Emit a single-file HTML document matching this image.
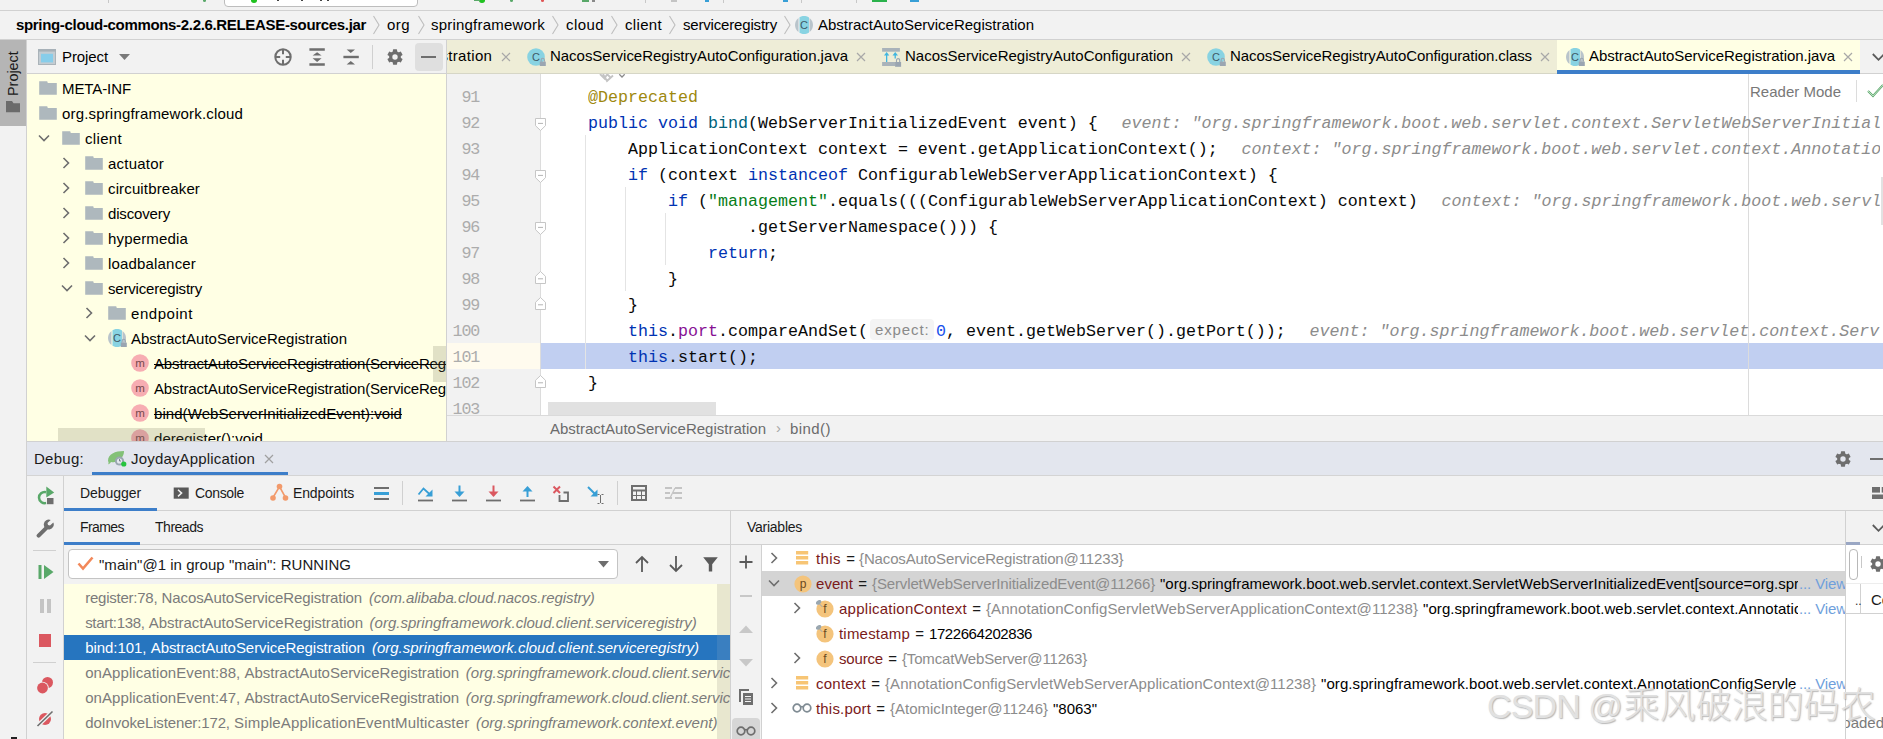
<!DOCTYPE html>
<html lang="en"><head><meta charset="utf-8"><title>IDE</title>
<style>
html,body{margin:0;padding:0;}
body{width:1883px;height:739px;overflow:hidden;background:#f2f2f2;font-family:"Liberation Sans","Noto Sans CJK SC",sans-serif;position:relative;}
#root{position:absolute;left:0;top:0;width:1883px;height:739px;overflow:hidden;}
#root div,#root span.t,#root svg{position:absolute;}
span.t{white-space:pre;}
.m{font-family:"Liberation Mono",monospace;transform:scaleY(1.03);transform-origin:0 17.4px;}
</style></head>
<body><div id="root">
<div style="left:0px;top:0px;width:1883px;height:10px;background:#f2f2f2;"></div>
<div style="left:224px;top:-6px;width:192px;height:10.5px;background:#fff;border:1px solid #bdbdbd;border-radius:4px;"></div>
<div style="left:251.2px;top:-2.8px;width:5.6px;height:5.6px;border-radius:50%;background:#21c221;"></div>
<div style="left:277px;top:0px;width:2px;height:1px;background:#444;"></div>
<div style="left:301px;top:0px;width:2px;height:1px;background:#444;"></div>
<div style="left:320px;top:0px;width:2px;height:1px;background:#444;"></div>
<div style="left:327px;top:0px;width:2px;height:1px;background:#444;"></div>
<div style="left:202.5px;top:-1.5px;width:3.0px;height:3.0px;border-radius:50%;background:#59a869;"></div>
<div style="left:479.2px;top:-2.8px;width:5.6px;height:5.6px;border-radius:50%;background:#21c221;"></div>
<div style="left:474px;top:0px;width:6px;height:1px;background:#59a869;"></div>
<div style="left:509.5px;top:-1.5px;width:3.0px;height:3.0px;border-radius:50%;background:#59a869;"></div>
<div style="left:540.5px;top:-1.5px;width:3.0px;height:3.0px;border-radius:50%;background:#e05555;"></div>
<div style="left:582px;top:0px;width:7px;height:1.5px;background:#59a869;"></div>
<div style="left:592px;top:0px;width:3px;height:2px;background:#8a8a8a;"></div>
<div style="left:671px;top:0px;width:6px;height:1.5px;background:#c4c4c4;"></div>
<div style="left:705px;top:0px;width:4px;height:1.5px;background:#389fd6;"></div>
<div style="left:783px;top:0px;width:5px;height:1.5px;background:#389fd6;"></div>
<div style="left:872px;top:0px;width:15px;height:1.5px;background:#2bb24c;"></div>
<div style="left:910px;top:0px;width:9px;height:1.5px;background:#389fd6;"></div>
<div style="left:108px;top:0px;width:1px;height:3px;background:#c8c8c8;"></div>
<div style="left:645px;top:0px;width:1px;height:3px;background:#c8c8c8;"></div>
<div style="left:723px;top:0px;width:1px;height:3px;background:#c8c8c8;"></div>
<div style="left:801px;top:0px;width:1px;height:3px;background:#c8c8c8;"></div>
<div style="left:856px;top:0px;width:1px;height:3px;background:#c8c8c8;"></div>
<div style="left:0px;top:10px;width:1883px;height:1px;background:#d1d1d1;"></div>
<div style="left:0px;top:11px;width:1883px;height:28px;background:#f2f2f2;"></div>
<span id="t1" class="t " style="left:16px;top:15px;line-height:20px;font-size:15px;color:#000;letter-spacing:-0.328px;font-weight:bold;">spring-cloud-commons-2.2.6.RELEASE-sources.jar</span>
<svg style="left:372px;top:15px;" width="9" height="20" viewBox="0 0 9 20"><path d="M1.5 1L7 10L1.5 19" fill="none" stroke="#bebebe" stroke-width="1.1"/></svg>
<span id="t2" class="t " style="left:387px;top:15px;line-height:20px;font-size:15px;color:#000;letter-spacing:0.438px;">org</span>
<svg style="left:417px;top:15px;" width="9" height="20" viewBox="0 0 9 20"><path d="M1.5 1L7 10L1.5 19" fill="none" stroke="#bebebe" stroke-width="1.1"/></svg>
<span id="t3" class="t " style="left:431px;top:15px;line-height:20px;font-size:15px;color:#000;letter-spacing:0.208px;">springframework</span>
<svg style="left:551px;top:15px;" width="9" height="20" viewBox="0 0 9 20"><path d="M1.5 1L7 10L1.5 19" fill="none" stroke="#bebebe" stroke-width="1.1"/></svg>
<span id="t4" class="t " style="left:566px;top:15px;line-height:20px;font-size:15px;color:#000;letter-spacing:0.428px;">cloud</span>
<svg style="left:610px;top:15px;" width="9" height="20" viewBox="0 0 9 20"><path d="M1.5 1L7 10L1.5 19" fill="none" stroke="#bebebe" stroke-width="1.1"/></svg>
<span id="t5" class="t " style="left:625px;top:15px;line-height:20px;font-size:15px;color:#000;letter-spacing:0.328px;">client</span>
<svg style="left:668px;top:15px;" width="9" height="20" viewBox="0 0 9 20"><path d="M1.5 1L7 10L1.5 19" fill="none" stroke="#bebebe" stroke-width="1.1"/></svg>
<span id="t6" class="t " style="left:683px;top:15px;line-height:20px;font-size:15px;color:#000;letter-spacing:-0.179px;">serviceregistry</span>
<svg style="left:783px;top:15px;" width="9" height="20" viewBox="0 0 9 20"><path d="M1.5 1L7 10L1.5 19" fill="none" stroke="#bebebe" stroke-width="1.1"/></svg>
<svg style="left:795px;top:16px;" width="19" height="18" viewBox="0 0 19 18"><path d="M3.5 1.88A9 9 0 0 0 3.5 16.12Z" fill="#b9c4cb"/><path d="M14.5 1.88A9 9 0 0 1 14.5 16.12Z" fill="#b9c4cb"/><path d="M4.5 1.21A9 9 0 0 1 14 1.52V16.48A9 9 0 0 1 4.5 16.79Z" fill="#88d3e2"/><text x="9.1" y="13" font-family="Liberation Sans,sans-serif" font-size="11" text-anchor="middle" fill="#3f5a66">C</text></svg>
<span id="t7" class="t " style="left:818px;top:15px;line-height:20px;font-size:15px;color:#000;letter-spacing:0.002px;">AbstractAutoServiceRegistration</span>
<div style="left:0px;top:39px;width:1883px;height:1px;background:#d1d1d1;"></div>
<div style="left:0px;top:40px;width:26px;height:699px;background:#f2f2f2;"></div>
<div style="left:26px;top:40px;width:1px;height:699px;background:#d1d1d1;"></div>
<div style="left:0px;top:40px;width:26px;height:86px;background:#b5b5b5;"></div>
<div style="left:3px;top:44px;width:20px;height:52px;"><span class="t" id="vproj" style="left:0;top:0;transform-origin:0 0;transform:translate(0px,52px) rotate(-90deg);font-size:14.4px;line-height:20px;color:#1a1a1a;">Project</span></div>
<svg style="left:6px;top:100.5px;" width="15" height="12" viewBox="0 0 15 12"><path d="M0 0H6L7.5 2.3H14V11.3H0Z" fill="#6b6b6b"/></svg>
<div style="left:11px;top:737px;width:6px;height:2px;background:#222;"></div>
<div style="left:27px;top:40px;width:419px;height:33px;background:#f2f2f2;"></div>
<svg style="left:38px;top:48.6px;" width="18" height="16" viewBox="0 0 18 16"><rect x="0.5" y="0.5" width="17" height="15" fill="#c3ccd2" stroke="#aab3b9"/><rect x="0" y="0" width="18" height="2.6" fill="#a7b1b8"/><rect x="3" y="4.8" width="12" height="8.6" fill="#87cdea"/></svg>
<span id="t8" class="t " style="left:62px;top:46.7px;line-height:20px;font-size:15px;color:#000;letter-spacing:-0.098px;">Project</span>
<svg style="left:119px;top:54px;" width="12" height="6" viewBox="0 0 12 6"><path d="M0 0H11L5.5 6Z" fill="#7a7a7a"/></svg>
<svg style="left:274px;top:48px;" width="18" height="18" viewBox="0 0 18 18"><circle cx="9" cy="9" r="7.7" fill="none" stroke="#6e6e6e" stroke-width="2"/><path d="M9 1.5V6.2M9 11.8V16.5M1.5 9H6.2M11.8 9H16.5" stroke="#6e6e6e" stroke-width="2"/></svg>
<svg style="left:309px;top:48px;" width="16" height="18" viewBox="0 0 16 18"><path d="M0.4 1.4H15.8M0.4 16.5H15.8" stroke="#6e6e6e" stroke-width="2.5"/><path d="M3.6 7.6L8.1 4.2L12.6 7.6ZM3.6 10.3L8.1 13.9L12.6 10.3Z" fill="#6e6e6e"/></svg>
<svg style="left:343px;top:48px;" width="16" height="18" viewBox="0 0 16 18"><path d="M0.4 9H15.8" stroke="#6e6e6e" stroke-width="2.4"/><path d="M3.6 1.5L7.8 5L12 1.5ZM3.6 16.6L7.8 12.9L12 16.6Z" fill="#6e6e6e"/></svg>
<div style="left:372px;top:45px;width:1px;height:24px;background:#d0d0d0;"></div>
<svg style="left:387.0px;top:49.0px;" width="16" height="16" viewBox="0 0 16 16"><g transform="translate(8,8)"><g fill="#6e6e6e"><rect x="-2.1" y="-7.7" width="4.2" height="5" rx="0.6" transform="rotate(0)"/><rect x="-2.1" y="-7.7" width="4.2" height="5" rx="0.6" transform="rotate(60)"/><rect x="-2.1" y="-7.7" width="4.2" height="5" rx="0.6" transform="rotate(120)"/><rect x="-2.1" y="-7.7" width="4.2" height="5" rx="0.6" transform="rotate(180)"/><rect x="-2.1" y="-7.7" width="4.2" height="5" rx="0.6" transform="rotate(240)"/><rect x="-2.1" y="-7.7" width="4.2" height="5" rx="0.6" transform="rotate(300)"/></g><circle r="5.9" fill="#6e6e6e"/><circle r="2.7" fill="#f2f2f2"/></g></svg>
<div style="left:415px;top:43px;width:28px;height:28px;background:#dfdfdf;border-radius:4px;"></div>
<div style="left:421px;top:56px;width:15px;height:2px;background:#6e6e6e;"></div>
<div style="left:27px;top:73px;width:419px;height:1px;background:#d1d1d1;"></div>
<div style="left:27px;top:74px;width:419px;height:367px;background:#ffffe4;"></div>
<div style="left:446px;top:40px;width:1px;height:401px;background:#d1d1d1;"></div>
<svg style="left:39px;top:81px;" width="18" height="14" viewBox="0 0 18 14"><path d="M0.2 0.2H8.2L8.8 2H17.8V13.7H0.2Z" fill="#aeb8bd"/></svg>
<span id="t9" class="t " style="left:62px;top:79px;line-height:20px;font-size:15px;color:#000;letter-spacing:-0.090px;">META-INF</span>
<svg style="left:39px;top:106px;" width="18" height="14" viewBox="0 0 18 14"><path d="M0.2 0.2H8.2L8.8 2H17.8V13.7H0.2Z" fill="#aeb8bd"/></svg>
<span id="t10" class="t " style="left:62px;top:104px;line-height:20px;font-size:15px;color:#000;letter-spacing:0.170px;">org.springframework.cloud</span>
<svg style="left:38px;top:134px;" width="12" height="8" viewBox="0 0 12 8"><path d="M1 1.5L6 6.5L11 1.5" fill="none" stroke="#6e6e6e" stroke-width="1.6"/></svg>
<svg style="left:62px;top:131px;" width="18" height="14" viewBox="0 0 18 14"><path d="M0.2 0.2H8.2L8.8 2H17.8V13.7H0.2Z" fill="#aeb8bd"/></svg>
<span id="t11" class="t " style="left:85px;top:129px;line-height:20px;font-size:15px;color:#000;letter-spacing:0.328px;">client</span>
<svg style="left:62px;top:157px;" width="8" height="12" viewBox="0 0 8 12"><path d="M1.5 1L6.5 6L1.5 11" fill="none" stroke="#6e6e6e" stroke-width="1.6"/></svg>
<svg style="left:85px;top:156px;" width="18" height="14" viewBox="0 0 18 14"><path d="M0.2 0.2H8.2L8.8 2H17.8V13.7H0.2Z" fill="#aeb8bd"/></svg>
<span id="t12" class="t " style="left:108px;top:154px;line-height:20px;font-size:15px;color:#000;letter-spacing:0.225px;">actuator</span>
<svg style="left:62px;top:182px;" width="8" height="12" viewBox="0 0 8 12"><path d="M1.5 1L6.5 6L1.5 11" fill="none" stroke="#6e6e6e" stroke-width="1.6"/></svg>
<svg style="left:85px;top:181px;" width="18" height="14" viewBox="0 0 18 14"><path d="M0.2 0.2H8.2L8.8 2H17.8V13.7H0.2Z" fill="#aeb8bd"/></svg>
<span id="t13" class="t " style="left:108px;top:179px;line-height:20px;font-size:15px;color:#000;letter-spacing:0.141px;">circuitbreaker</span>
<svg style="left:62px;top:207px;" width="8" height="12" viewBox="0 0 8 12"><path d="M1.5 1L6.5 6L1.5 11" fill="none" stroke="#6e6e6e" stroke-width="1.6"/></svg>
<svg style="left:85px;top:206px;" width="18" height="14" viewBox="0 0 18 14"><path d="M0.2 0.2H8.2L8.8 2H17.8V13.7H0.2Z" fill="#aeb8bd"/></svg>
<span id="t14" class="t " style="left:108px;top:204px;line-height:20px;font-size:15px;color:#000;letter-spacing:-0.151px;">discovery</span>
<svg style="left:62px;top:232px;" width="8" height="12" viewBox="0 0 8 12"><path d="M1.5 1L6.5 6L1.5 11" fill="none" stroke="#6e6e6e" stroke-width="1.6"/></svg>
<svg style="left:85px;top:231px;" width="18" height="14" viewBox="0 0 18 14"><path d="M0.2 0.2H8.2L8.8 2H17.8V13.7H0.2Z" fill="#aeb8bd"/></svg>
<span id="t15" class="t " style="left:108px;top:229px;line-height:20px;font-size:15px;color:#000;letter-spacing:0.161px;">hypermedia</span>
<svg style="left:62px;top:257px;" width="8" height="12" viewBox="0 0 8 12"><path d="M1.5 1L6.5 6L1.5 11" fill="none" stroke="#6e6e6e" stroke-width="1.6"/></svg>
<svg style="left:85px;top:256px;" width="18" height="14" viewBox="0 0 18 14"><path d="M0.2 0.2H8.2L8.8 2H17.8V13.7H0.2Z" fill="#aeb8bd"/></svg>
<span id="t16" class="t " style="left:108px;top:254px;line-height:20px;font-size:15px;color:#000;letter-spacing:0.174px;">loadbalancer</span>
<svg style="left:61px;top:284px;" width="12" height="8" viewBox="0 0 12 8"><path d="M1 1.5L6 6.5L11 1.5" fill="none" stroke="#6e6e6e" stroke-width="1.6"/></svg>
<svg style="left:85px;top:281px;" width="18" height="14" viewBox="0 0 18 14"><path d="M0.2 0.2H8.2L8.8 2H17.8V13.7H0.2Z" fill="#aeb8bd"/></svg>
<span id="t17" class="t " style="left:108px;top:279px;line-height:20px;font-size:15px;color:#000;letter-spacing:-0.179px;">serviceregistry</span>
<svg style="left:85px;top:307px;" width="8" height="12" viewBox="0 0 8 12"><path d="M1.5 1L6.5 6L1.5 11" fill="none" stroke="#6e6e6e" stroke-width="1.6"/></svg>
<svg style="left:108px;top:306px;" width="18" height="14" viewBox="0 0 18 14"><path d="M0.2 0.2H8.2L8.8 2H17.8V13.7H0.2Z" fill="#aeb8bd"/></svg>
<span id="t18" class="t " style="left:131px;top:304px;line-height:20px;font-size:15px;color:#000;letter-spacing:0.555px;">endpoint</span>
<svg style="left:84px;top:334px;" width="12" height="8" viewBox="0 0 12 8"><path d="M1 1.5L6 6.5L11 1.5" fill="none" stroke="#6e6e6e" stroke-width="1.6"/></svg>
<svg style="left:108px;top:329px;" width="19" height="18" viewBox="0 0 19 18"><path d="M3.5 1.88A9 9 0 0 0 3.5 16.12Z" fill="#b9c4cb"/><path d="M14.5 1.88A9 9 0 0 1 14.5 16.12Z" fill="#b9c4cb"/><path d="M4.5 1.21A9 9 0 0 1 14 1.52V16.48A9 9 0 0 1 4.5 16.79Z" fill="#88d3e2"/><text x="9.1" y="13" font-family="Liberation Sans,sans-serif" font-size="11" text-anchor="middle" fill="#3f5a66">C</text><rect x="12.8" y="13.6" width="6" height="4.4" fill="#9aa5b1"/><path d="M14.2 13.8V11.9a1.6 1.6 0 0 1 3.2 0V13.8" fill="none" stroke="#9aa5b1" stroke-width="1.1"/></svg>
<span id="t19" class="t " style="left:131px;top:329px;line-height:20px;font-size:15px;color:#000;letter-spacing:0.002px;">AbstractAutoServiceRegistration</span>
<div style="left:27px;top:74px;width:419px;height:367px;overflow:hidden;">
<svg style="left:104px;top:280px;" width="18" height="18" viewBox="0 0 18 18"><circle cx="9" cy="9" r="8.8" fill="#f7adb2"/><text x="9" y="12.6" font-family="Liberation Sans,sans-serif" font-size="11.5" text-anchor="middle" fill="#75484c">m</text></svg>
<span id="t20" class="t " style="left:127px;top:280px;line-height:20px;font-size:15px;color:#000;letter-spacing:-0.154px;text-decoration:line-through;text-decoration-thickness:1px;">AbstractAutoServiceRegistration(ServiceReg</span>
<span id="t21" class="t " style="left:419px;top:280px;line-height:20px;font-size:15px;color:#000;text-decoration:line-through;text-decoration-thickness:1px;">istry)</span>
<svg style="left:104px;top:305px;" width="18" height="18" viewBox="0 0 18 18"><circle cx="9" cy="9" r="8.8" fill="#f7adb2"/><text x="9" y="12.6" font-family="Liberation Sans,sans-serif" font-size="11.5" text-anchor="middle" fill="#75484c">m</text></svg>
<span id="t22" class="t " style="left:127px;top:305px;line-height:20px;font-size:15px;color:#000;letter-spacing:-0.154px;">AbstractAutoServiceRegistration(ServiceReg</span>
<span id="t23" class="t " style="left:419px;top:305px;line-height:20px;font-size:15px;color:#000;">istry, AutoServiceRegistrationProperties)</span>
<svg style="left:104px;top:330px;" width="18" height="18" viewBox="0 0 18 18"><circle cx="9" cy="9" r="8.8" fill="#f7adb2"/><text x="9" y="12.6" font-family="Liberation Sans,sans-serif" font-size="11.5" text-anchor="middle" fill="#75484c">m</text></svg>
<span id="t24" class="t " style="left:127px;top:330px;line-height:20px;font-size:15px;color:#000;letter-spacing:0.064px;text-decoration:line-through;text-decoration-thickness:1px;">bind(WebServerInitializedEvent):void</span>
<svg style="left:104px;top:355px;" width="18" height="18" viewBox="0 0 18 18"><circle cx="9" cy="9" r="8.8" fill="#f7adb2"/><text x="9" y="12.6" font-family="Liberation Sans,sans-serif" font-size="11.5" text-anchor="middle" fill="#75484c">m</text></svg>
<span id="t25" class="t " style="left:127px;top:355px;line-height:20px;font-size:15px;color:#000;letter-spacing:0.036px;">deregister():void</span>
</div>
<div style="left:433px;top:346px;width:13px;height:36px;background:rgba(120,120,90,0.22);"></div>
<div style="left:58px;top:428px;width:147px;height:13px;background:rgba(120,120,90,0.22);"></div>
<div style="left:447px;top:40px;width:1436px;height:33px;background:#eeedd7;"></div>
<div style="left:447px;top:73px;width:1436px;height:1px;background:#d6d6c6;"></div>
<div style="left:447px;top:40px;width:60px;height:33px;overflow:hidden;">
<span id="t26" class="t " style="left:1.3px;top:6.2px;line-height:20px;font-size:15px;color:#000;letter-spacing:0.328px;">tration</span>
<span class="t" style="right:58.9px;top:6.2px;line-height:20px;font-size:15px;color:#000;">AbstractAutoServiceRegis</span>
</div>
<svg style="left:501px;top:52px;" width="10" height="10" viewBox="0 0 10 10"><path d="M1 1L9 9M9 1L1 9" stroke="#a8a8a8" stroke-width="1.2" fill="none"/></svg>
<svg style="left:527px;top:48px;" width="19" height="18" viewBox="0 0 19 18"><circle cx="9" cy="9" r="8.8" fill="#88d3e2"/><text x="9" y="13" font-family="Liberation Sans,sans-serif" font-size="11" text-anchor="middle" fill="#3f5a66">C</text><rect x="12.8" y="13.6" width="6" height="4.4" fill="#9aa5b1"/><path d="M14.2 13.8V11.9a1.6 1.6 0 0 1 3.2 0V13.8" fill="none" stroke="#9aa5b1" stroke-width="1.1"/></svg>
<span id="t27" class="t " style="left:550px;top:46.2px;line-height:20px;font-size:15px;color:#000;letter-spacing:-0.031px;">NacosServiceRegistryAutoConfiguration.java</span>
<svg style="left:856px;top:52px;" width="10" height="10" viewBox="0 0 10 10"><path d="M1 1L9 9M9 1L1 9" stroke="#a8a8a8" stroke-width="1.2" fill="none"/></svg>
<svg style="left:882px;top:48px;" width="20" height="19" viewBox="0 0 20 19"><rect x="0.1" y="0" width="17.8" height="3.7" fill="#a9b3ba"/><rect x="0.1" y="14" width="13.2" height="4" fill="#a9b3ba"/><path d="M2 7.4L4.65 3.9L7.3 7.4ZM10.5 7.4L13.2 3.9L16 7.4Z" fill="#40b6e0"/><path d="M4.65 7V14M13.2 7V10.5" stroke="#40b6e0" stroke-width="1.3"/><rect x="13.1" y="14" width="6" height="4.8" fill="#9aa5b1"/><path d="M14.5 14.2V12.2a1.6 1.6 0 0 1 3.2 0V14.2" fill="none" stroke="#9aa5b1" stroke-width="1.1"/></svg>
<span id="t28" class="t " style="left:905px;top:46.2px;line-height:20px;font-size:15px;color:#000;letter-spacing:0.010px;">NacosServiceRegistryAutoConfiguration</span>
<svg style="left:1181px;top:52px;" width="10" height="10" viewBox="0 0 10 10"><path d="M1 1L9 9M9 1L1 9" stroke="#a8a8a8" stroke-width="1.2" fill="none"/></svg>
<svg style="left:1207px;top:48px;" width="19" height="18" viewBox="0 0 19 18"><circle cx="9" cy="9" r="8.8" fill="#88d3e2"/><text x="9" y="13" font-family="Liberation Sans,sans-serif" font-size="11" text-anchor="middle" fill="#3f5a66">C</text><rect x="12.8" y="13.6" width="6" height="4.4" fill="#9aa5b1"/><path d="M14.2 13.8V11.9a1.6 1.6 0 0 1 3.2 0V13.8" fill="none" stroke="#9aa5b1" stroke-width="1.1"/></svg>
<span id="t29" class="t " style="left:1230px;top:46.2px;line-height:20px;font-size:15px;color:#000;letter-spacing:-0.093px;">NacosServiceRegistryAutoConfiguration.class</span>
<svg style="left:1540px;top:52px;" width="10" height="10" viewBox="0 0 10 10"><path d="M1 1L9 9M9 1L1 9" stroke="#a8a8a8" stroke-width="1.2" fill="none"/></svg>
<div style="left:1557px;top:40px;width:303px;height:33px;background:#ffffe4;"></div>
<div style="left:1557px;top:70px;width:303px;height:4px;background:#3d7ec9;"></div>
<svg style="left:1566px;top:48px;" width="19" height="18" viewBox="0 0 19 18"><path d="M3.5 1.88A9 9 0 0 0 3.5 16.12Z" fill="#b9c4cb"/><path d="M14.5 1.88A9 9 0 0 1 14.5 16.12Z" fill="#b9c4cb"/><path d="M4.5 1.21A9 9 0 0 1 14 1.52V16.48A9 9 0 0 1 4.5 16.79Z" fill="#88d3e2"/><text x="9.1" y="13" font-family="Liberation Sans,sans-serif" font-size="11" text-anchor="middle" fill="#3f5a66">C</text><rect x="12.8" y="13.6" width="6" height="4.4" fill="#9aa5b1"/><path d="M14.2 13.8V11.9a1.6 1.6 0 0 1 3.2 0V13.8" fill="none" stroke="#9aa5b1" stroke-width="1.1"/></svg>
<span id="t30" class="t " style="left:1589px;top:46.2px;line-height:20px;font-size:15px;color:#000;letter-spacing:-0.045px;">AbstractAutoServiceRegistration.java</span>
<svg style="left:1843px;top:52px;" width="10" height="10" viewBox="0 0 10 10"><path d="M1 1L9 9M9 1L1 9" stroke="#a8a8a8" stroke-width="1.2" fill="none"/></svg>
<div style="left:1860px;top:40px;width:23px;height:33px;background:#f2f2f2;"></div>
<div style="left:1860px;top:73px;width:23px;height:1px;background:#d1d1d1;"></div>
<svg style="left:1872px;top:53px;" width="12" height="9" viewBox="0 0 12 9"><path d="M0.8 1L6.5 6.8L12.2 1" fill="none" stroke="#5a5a5a" stroke-width="1.8"/></svg>
<div style="left:447px;top:74px;width:93px;height:341px;background:#f2f2f2;"></div>
<div style="left:540px;top:74px;width:1px;height:341px;background:#dcdcdc;"></div>
<div style="left:541px;top:74px;width:1342px;height:341px;background:#fff;"></div>
<div style="left:447px;top:343px;width:93px;height:26px;background:#fffbee;"></div>
<div style="left:541px;top:343px;width:1342px;height:26px;background:#c1cff1;"></div>
<div style="left:1748px;top:74px;width:1px;height:341px;background:#dcdcdc;"></div>
<div style="left:585px;top:135px;width:1px;height:234px;background:#e4e4e4;"></div>
<div style="left:625px;top:187px;width:1px;height:104px;background:#e4e4e4;"></div>
<div style="left:665px;top:213px;width:1px;height:52px;background:#e4e4e4;"></div>
<span id="t31" class="t m" style="left:446px;top:85px;line-height:26px;font-size:16.667px;color:#acacac;width:33px;text-align:right;letter-spacing:-1.2px;">91</span>
<span id="t32" class="t m" style="left:446px;top:111px;line-height:26px;font-size:16.667px;color:#acacac;width:33px;text-align:right;letter-spacing:-1.2px;">92</span>
<span id="t33" class="t m" style="left:446px;top:137px;line-height:26px;font-size:16.667px;color:#acacac;width:33px;text-align:right;letter-spacing:-1.2px;">93</span>
<span id="t34" class="t m" style="left:446px;top:163px;line-height:26px;font-size:16.667px;color:#acacac;width:33px;text-align:right;letter-spacing:-1.2px;">94</span>
<span id="t35" class="t m" style="left:446px;top:189px;line-height:26px;font-size:16.667px;color:#acacac;width:33px;text-align:right;letter-spacing:-1.2px;">95</span>
<span id="t36" class="t m" style="left:446px;top:215px;line-height:26px;font-size:16.667px;color:#acacac;width:33px;text-align:right;letter-spacing:-1.2px;">96</span>
<span id="t37" class="t m" style="left:446px;top:241px;line-height:26px;font-size:16.667px;color:#acacac;width:33px;text-align:right;letter-spacing:-1.2px;">97</span>
<span id="t38" class="t m" style="left:446px;top:267px;line-height:26px;font-size:16.667px;color:#acacac;width:33px;text-align:right;letter-spacing:-1.2px;">98</span>
<span id="t39" class="t m" style="left:446px;top:293px;line-height:26px;font-size:16.667px;color:#acacac;width:33px;text-align:right;letter-spacing:-1.2px;">99</span>
<span id="t40" class="t m" style="left:446px;top:319px;line-height:26px;font-size:16.667px;color:#acacac;width:33px;text-align:right;letter-spacing:-1.2px;">100</span>
<span id="t41" class="t m" style="left:446px;top:345px;line-height:26px;font-size:16.667px;color:#acacac;width:33px;text-align:right;letter-spacing:-1.2px;">101</span>
<span id="t42" class="t m" style="left:446px;top:371px;line-height:26px;font-size:16.667px;color:#acacac;width:33px;text-align:right;letter-spacing:-1.2px;">102</span>
<span id="t43" class="t m" style="left:446px;top:397px;line-height:26px;font-size:16.667px;color:#acacac;width:33px;text-align:right;letter-spacing:-1.2px;">103</span>
<span id="t44" class="t m" style="left:588px;top:85px;line-height:26px;font-size:16.667px;color:#000;"><span style="color:#9e880d">@Deprecated</span></span>
<span id="t45" class="t m" style="left:1121.5px;top:111px;line-height:26px;font-size:16.667px;color:#8c8c8c;font-style:italic;">event: "org.springframework.boot.web.servlet.context.ServletWebServerInitializedEvent[source=org.springframework</span>
<span id="t46" class="t m" style="left:588px;top:111px;line-height:26px;font-size:16.667px;color:#000;"><span style="color:#0033b3">public void </span><span style="color:#00627a">bind</span><span style="color:#080808">(WebServerInitializedEvent event) {</span></span>
<span id="t47" class="t m" style="left:1241.5px;top:137px;line-height:26px;font-size:16.667px;color:#8c8c8c;font-style:italic;">context: "org.springframework.boot.web.servlet.context.AnnotationConfigServletWebServerApplicationContext@1c9</span>
<span id="t48" class="t m" style="left:628px;top:137px;line-height:26px;font-size:16.667px;color:#000;"><span style="color:#080808">ApplicationContext context = event.getApplicationContext();</span></span>
<span id="t49" class="t m" style="left:628px;top:163px;line-height:26px;font-size:16.667px;color:#000;"><span style="color:#0033b3">if</span><span style="color:#080808"> (context </span><span style="color:#0033b3">instanceof</span><span style="color:#080808"> ConfigurableWebServerApplicationContext) {</span></span>
<span id="t50" class="t m" style="left:1441.5px;top:189px;line-height:26px;font-size:16.667px;color:#8c8c8c;font-style:italic;">context: "org.springframework.boot.web.servlet.context.AnnotationConfigServletWebServerApplicationContext@1c9</span>
<span id="t51" class="t m" style="left:668px;top:189px;line-height:26px;font-size:16.667px;color:#000;"><span style="color:#0033b3">if</span><span style="color:#080808"> (</span><span style="color:#067d17">"management"</span><span style="color:#080808">.equals(((ConfigurableWebServerApplicationContext) context)</span></span>
<span id="t52" class="t m" style="left:748px;top:215px;line-height:26px;font-size:16.667px;color:#000;"><span style="color:#080808">.getServerNamespace())) {</span></span>
<span id="t53" class="t m" style="left:708px;top:241px;line-height:26px;font-size:16.667px;color:#000;"><span style="color:#0033b3">return</span><span style="color:#080808">;</span></span>
<span id="t54" class="t m" style="left:668px;top:267px;line-height:26px;font-size:16.667px;color:#000;"><span style="color:#080808">}</span></span>
<span id="t55" class="t m" style="left:628px;top:293px;line-height:26px;font-size:16.667px;color:#000;"><span style="color:#080808">}</span></span>
<span id="t56" class="t m" style="left:628px;top:319px;line-height:26px;font-size:16.667px;color:#000;"><span style="color:#0033b3">this</span><span style="color:#080808">.</span><span style="color:#871094">port</span><span style="color:#080808">.compareAndSet(</span></span>
<div style="left:870px;top:319.3px;width:64px;height:21px;background:#f4f4f4;border-radius:4px;"></div>
<span id="t57" class="t " style="left:875px;top:320.3px;line-height:20px;font-size:15px;color:#8a8a8a;letter-spacing:0.875px;">expect:</span>
<span id="t58" class="t m" style="left:1309.5px;top:319px;line-height:26px;font-size:16.667px;color:#8c8c8c;font-style:italic;">event: "org.springframework.boot.web.servlet.context.ServletWebServerInitializedEvent[source=org.springframework</span>
<span id="t59" class="t m" style="left:936.0px;top:319px;line-height:26px;font-size:16.667px;color:#000;"><span style="color:#1750eb">0</span><span style="color:#080808">, event.getWebServer().getPort());</span></span>
<span id="t60" class="t m" style="left:628px;top:345px;line-height:26px;font-size:16.667px;color:#000;"><span style="color:#0033b3">this</span><span style="color:#080808">.start();</span></span>
<span id="t61" class="t m" style="left:588px;top:371px;line-height:26px;font-size:16.667px;color:#000;"><span style="color:#080808">}</span></span>
<svg style="left:535px;top:118px;" width="11" height="13" viewBox="0 0 11 13"><path d="M0.5 0.5H10.5V7.7L5.5 12.5L0.5 7.7Z" fill="#fff" stroke="#c6c6c6"/><path d="M3 5.4H8" stroke="#b4b4b4"/></svg>
<svg style="left:535px;top:170px;" width="11" height="13" viewBox="0 0 11 13"><path d="M0.5 0.5H10.5V7.7L5.5 12.5L0.5 7.7Z" fill="#fff" stroke="#c6c6c6"/><path d="M3 5.4H8" stroke="#b4b4b4"/></svg>
<svg style="left:535px;top:222px;" width="11" height="13" viewBox="0 0 11 13"><path d="M0.5 0.5H10.5V7.7L5.5 12.5L0.5 7.7Z" fill="#fff" stroke="#c6c6c6"/><path d="M3 5.4H8" stroke="#b4b4b4"/></svg>
<svg style="left:535px;top:271.2px;" width="11" height="13" viewBox="0 0 11 13"><path d="M0.5 12.5H10.5V5.3L5.5 0.5L0.5 5.3Z" fill="#fff" stroke="#c6c6c6"/><path d="M3 7.8H8" stroke="#b4b4b4"/></svg>
<svg style="left:535px;top:297.2px;" width="11" height="13" viewBox="0 0 11 13"><path d="M0.5 12.5H10.5V5.3L5.5 0.5L0.5 5.3Z" fill="#fff" stroke="#c6c6c6"/><path d="M3 7.8H8" stroke="#b4b4b4"/></svg>
<svg style="left:535px;top:375.2px;" width="11" height="13" viewBox="0 0 11 13"><path d="M0.5 12.5H10.5V5.3L5.5 0.5L0.5 5.3Z" fill="#fff" stroke="#c6c6c6"/><path d="M3 7.8H8" stroke="#b4b4b4"/></svg>
<svg style="left:598px;top:74px;" width="30" height="9" viewBox="0 0 30 9"><path d="M2 0L6.5 4.5L9 0.5M5 0L9 7L15 1.5M9 0L12 3" stroke="#c4c4c4" fill="none" stroke-width="1.8"/><path d="M21.3 0.3L24 3L26.7 0.3" stroke="#8a8a8a" fill="none" stroke-width="1.3"/></svg>
<div style="left:1749px;top:75px;width:134px;height:30px;background:#fff;"></div>
<span id="t62" class="t " style="left:1750px;top:82px;line-height:20px;font-size:15px;color:#787878;letter-spacing:0.010px;">Reader Mode</span>
<div style="left:1856px;top:80px;width:1px;height:22px;background:#dcdcdc;"></div>
<svg style="left:1866px;top:82px;" width="18" height="16" viewBox="0 0 18 16"><path d="M2 9L7 14L17 3" fill="none" stroke="#59a869" stroke-width="2"/><path d="M2 9L7 14L17 3" fill="none" stroke="#fff" stroke-width="0.6"/></svg>
<div style="left:1880px;top:105px;width:3px;height:238px;background:#fff;"></div>
<div style="left:1880px;top:369px;width:3px;height:33px;background:#fff;"></div>
<div style="left:1881px;top:177px;width:2px;height:48px;background:#e2e2e2;"></div>
<div style="left:548px;top:402px;width:168px;height:13px;background:#e1e1e1;"></div>
<div style="left:447px;top:415px;width:1436px;height:26px;background:#f2f2f2;"></div>
<div style="left:447px;top:415px;width:1436px;height:1px;background:#dadada;"></div>
<span id="t63" class="t " style="left:550px;top:419px;line-height:20px;font-size:15px;color:#6b6b6b;letter-spacing:0.002px;">AbstractAutoServiceRegistration</span>
<span id="t64" class="t " style="left:776px;top:418px;line-height:20px;font-size:15px;color:#a6a6a6;">›</span>
<span id="t65" class="t " style="left:790px;top:419px;line-height:20px;font-size:15px;color:#6b6b6b;letter-spacing:0.440px;">bind()</span>
<div style="left:27px;top:441px;width:1856px;height:1px;background:#d1d1d1;"></div>
<div style="left:27px;top:442px;width:1856px;height:33px;background:#e3e6ee;"></div>
<span id="t66" class="t " style="left:34px;top:448.6px;line-height:20px;font-size:15px;color:#1a1a1a;letter-spacing:0.271px;">Debug:</span>
<svg style="left:106px;top:448px;" width="22" height="20" viewBox="0 0 22 20"><path d="M2 13C2 6 9 3 18 3C18 5 17.5 7 16.5 8.5C15 12 11 15 5 14C4 15.5 3 16 2 16.5C2.5 15.5 3 14.5 2 13Z" fill="#83c177"/><circle cx="13.5" cy="13" r="4.6" fill="#9aa7b0"/><circle cx="13.5" cy="13" r="2.6" fill="#e4e7ef"/><path d="M13.5 11V13H15" stroke="#6e7780" fill="none" stroke-width="0.9"/><circle cx="17.8" cy="16" r="2.6" fill="#26c43f"/></svg>
<span id="t67" class="t " style="left:131px;top:448.6px;line-height:20px;font-size:15px;color:#1a1a1a;letter-spacing:0.181px;">JoydayApplication</span>
<svg style="left:264px;top:454px;" width="10" height="10" viewBox="0 0 10 10"><path d="M1 1L9 9M9 1L1 9" stroke="#a0a0a0" stroke-width="1.2" fill="none"/></svg>
<div style="left:92px;top:472px;width:196px;height:4px;background:#3d7ec9;"></div>
<svg style="left:1835.0px;top:451.0px;" width="16" height="16" viewBox="0 0 16 16"><g transform="translate(8,8)"><g fill="#6e6e6e"><rect x="-2.1" y="-7.7" width="4.2" height="5" rx="0.6" transform="rotate(0)"/><rect x="-2.1" y="-7.7" width="4.2" height="5" rx="0.6" transform="rotate(60)"/><rect x="-2.1" y="-7.7" width="4.2" height="5" rx="0.6" transform="rotate(120)"/><rect x="-2.1" y="-7.7" width="4.2" height="5" rx="0.6" transform="rotate(180)"/><rect x="-2.1" y="-7.7" width="4.2" height="5" rx="0.6" transform="rotate(240)"/><rect x="-2.1" y="-7.7" width="4.2" height="5" rx="0.6" transform="rotate(300)"/></g><circle r="5.9" fill="#6e6e6e"/><circle r="2.7" fill="#e3e6ee"/></g></svg>
<div style="left:1870px;top:458px;width:13px;height:2px;background:#6e6e6e;"></div>
<div style="left:27px;top:475px;width:1856px;height:1px;background:#d4d4d4;"></div>
<div style="left:27px;top:476px;width:36px;height:263px;background:#f2f2f2;"></div>
<div style="left:63px;top:476px;width:1px;height:263px;background:#d1d1d1;"></div>
<svg style="left:36px;top:485px;" width="20" height="20" viewBox="0 0 20 20"><path d="M10.5 17.9A5.6 5.6 0 1 1 10 7.2" fill="none" stroke="#59a869" stroke-width="2.5"/><path d="M10.3 1.4L18.2 7.4L10.3 12.6Z" fill="#59a869"/><rect x="10.3" y="12.4" width="7.2" height="6.8" fill="#f2f2f2"/><rect x="11" y="13" width="6.5" height="6.2" fill="#6e6e6e"/></svg>
<svg style="left:36px;top:519px;" width="19" height="19" viewBox="0 0 19 19"><path d="M2.6 16.6L10.4 8.8" stroke="#6e6e6e" stroke-width="4" stroke-linecap="round"/><path d="M17.3 3.4L14 6.6L12 6L11.5 4L14.7 0.9A5 5 0 1 0 17.3 3.4Z" fill="#6e6e6e"/></svg>
<div style="left:33px;top:550px;width:23px;height:1px;background:#d0d0d0;"></div>
<svg style="left:38px;top:564px;" width="16" height="16" viewBox="0 0 16 16"><rect x="0.5" y="1" width="3" height="14" fill="#59a869"/><path d="M6 1L15.5 8L6 15Z" fill="#59a869"/></svg>
<div style="left:40px;top:599px;width:4px;height:14px;background:#c4c4c4;"></div>
<div style="left:46.5px;top:599px;width:4px;height:14px;background:#c4c4c4;"></div>
<div style="left:39px;top:634px;width:12px;height:13px;background:#db5860;"></div>
<div style="left:33px;top:662px;width:23px;height:1px;background:#d0d0d0;"></div>
<svg style="left:36px;top:676px;" width="19" height="19" viewBox="0 0 19 19"><circle cx="11.5" cy="6.5" r="5.5" fill="#db5860"/><circle cx="6.5" cy="12" r="6.2" fill="#f2f2f2"/><circle cx="6.5" cy="12" r="5.4" fill="#db5860"/></svg>
<svg style="left:36px;top:709px;" width="19" height="19" viewBox="0 0 19 19"><circle cx="9" cy="10" r="6" fill="#db5860"/><path d="M1.5 17L16.5 2.5" stroke="#f2f2f2" stroke-width="4"/><path d="M1.5 17L16.5 2.5" stroke="#6e6e6e" stroke-width="1.6"/></svg>
<div style="left:64px;top:476px;width:1819px;height:34px;background:#f2f2f2;"></div>
<span id="t68" class="t " style="left:80px;top:483px;line-height:20px;font-size:14px;color:#1a1a1a;letter-spacing:-0.062px;">Debugger</span>
<svg style="left:173px;top:487px;" width="16" height="12" viewBox="0 0 16 12"><rect x="0.7" y="0.5" width="15" height="11.2" fill="#595959"/><path d="M5 2.8L8.6 6.1L5 9.4" fill="none" stroke="#f2f2f2" stroke-width="1.5"/></svg>
<span id="t69" class="t " style="left:195px;top:483px;line-height:20px;font-size:14px;color:#1a1a1a;letter-spacing:-0.339px;">Console</span>
<svg style="left:269px;top:483px;" width="20" height="19" viewBox="0 0 20 19"><path d="M4 14.5L10.5 3.5L16.5 14.5" fill="none" stroke="#f29a6b" stroke-width="1.6"/><circle cx="10.5" cy="3.5" r="2.8" fill="#f29a6b"/><circle cx="4" cy="15" r="2.8" fill="#f29a6b"/><circle cx="16.5" cy="15" r="2.8" fill="#f29a6b"/></svg>
<span id="t70" class="t " style="left:293px;top:483px;line-height:20px;font-size:14px;color:#1a1a1a;letter-spacing:-0.142px;">Endpoints</span>
<div style="left:374px;top:487px;width:15px;height:2px;background:#6e6e6e;"></div>
<div style="left:374px;top:492px;width:15px;height:3px;background:#389fd6;"></div>
<div style="left:374px;top:498px;width:15px;height:2px;background:#6e6e6e;"></div>
<div style="left:402px;top:481px;width:1px;height:24px;background:#d0d0d0;"></div>
<svg style="left:417px;top:484.7px;" width="17" height="17" viewBox="0 0 17 17"><path d="M1.5 9.5L6.5 3.5L13 9.5" fill="none" stroke="#389fd6" stroke-width="1.8"/><path d="M15.5 4.5V11.5H8.5Z" fill="#389fd6"/><path d="M1 15.5H16" stroke="#6e6e6e" stroke-width="1.8"/></svg>
<svg style="left:451px;top:484.7px;" width="17" height="17" viewBox="0 0 17 17"><path d="M8.5 0.5V9" stroke="#389fd6" stroke-width="2"/><path d="M3.5 6.5L8.5 12L13.5 6.5Z" fill="#389fd6"/><path d="M1 15.5H16" stroke="#6e6e6e" stroke-width="1.8"/></svg>
<svg style="left:485px;top:484.7px;" width="17" height="17" viewBox="0 0 17 17"><path d="M8.5 0.5V9" stroke="#db5860" stroke-width="2"/><path d="M3.5 6.5L8.5 12L13.5 6.5Z" fill="#db5860"/><path d="M1 15.5H16" stroke="#6e6e6e" stroke-width="1.8"/></svg>
<svg style="left:519px;top:484.7px;" width="17" height="17" viewBox="0 0 17 17"><path d="M8.5 12V4" stroke="#389fd6" stroke-width="2"/><path d="M3.5 6.5L8.5 1L13.5 6.5Z" fill="#389fd6"/><path d="M1 15.5H16" stroke="#6e6e6e" stroke-width="1.8"/></svg>
<svg style="left:552px;top:484.7px;" width="18" height="18" viewBox="0 0 18 18"><path d="M1.5 1.5L8 8M8 1.5L1.5 8" stroke="#db5860" stroke-width="2"/><path d="M7.5 10V16H16V7.5H11.5" fill="none" stroke="#6e6e6e" stroke-width="1.8"/></svg>
<svg style="left:586px;top:484.7px;" width="19" height="19" viewBox="0 0 19 19"><path d="M2 2L10 10" stroke="#389fd6" stroke-width="2"/><path d="M11.5 4.5V11.5H4.5Z" fill="#389fd6"/><path d="M11.5 9.5H13.5M15.5 9.5H17.5M11.5 18.5H13.5M15.5 18.5H17.5M14.5 10V18" stroke="#6e6e6e" stroke-width="1" fill="none"/></svg>
<div style="left:617px;top:481px;width:1px;height:24px;background:#d0d0d0;"></div>
<svg style="left:631px;top:485px;" width="16" height="16" viewBox="0 0 16 16"><rect x="1" y="1" width="14" height="14" fill="none" stroke="#6e6e6e" stroke-width="2"/><path d="M1 5.5H15" stroke="#6e6e6e" stroke-width="2"/><path d="M5.5 6V15M10.5 6V15M1 10.5H15" stroke="#6e6e6e" stroke-width="1"/></svg>
<svg style="left:665px;top:486px;" width="17" height="14" viewBox="0 0 17 14"><path d="M0 2H7M10 2H17M0 7H5M8 7H17M0 12H7M10 12H17" stroke="#c4c4c4" stroke-width="1.8"/><path d="M10 2L5 12" stroke="#c4c4c4" stroke-width="1.2"/></svg>
<svg style="left:1871.5px;top:487px;" width="12" height="12" viewBox="0 0 12 12"><rect x="0" y="0" width="8" height="5.6" fill="#6e6e6e"/><rect x="9.7" y="0" width="4" height="5.6" fill="#6e6e6e"/><rect x="0" y="7.5" width="13" height="4.5" fill="#6e6e6e"/></svg>
<div style="left:64px;top:510px;width:1819px;height:1px;background:#d1d1d1;"></div>
<div style="left:64px;top:508px;width:93px;height:3px;background:#3d7ec9;"></div>
<div style="left:64px;top:511px;width:666px;height:33px;background:#f2f2f2;"></div>
<span id="t71" class="t " style="left:80px;top:517.3px;line-height:20px;font-size:14px;color:#1a1a1a;letter-spacing:-0.576px;">Frames</span>
<span id="t72" class="t " style="left:155px;top:517.3px;line-height:20px;font-size:14px;color:#1a1a1a;letter-spacing:-0.480px;">Threads</span>
<div style="left:64px;top:544px;width:666px;height:1px;background:#d1d1d1;"></div>
<div style="left:64px;top:542px;width:76px;height:3px;background:#3d7ec9;"></div>
<div style="left:64px;top:545px;width:666px;height:39px;background:#f2f2f2;"></div>
<div style="left:68px;top:549px;width:548px;height:28px;background:#fff;border:1px solid #c4c4c4;border-radius:4px;"></div>
<svg style="left:77px;top:556px;" width="17" height="15" viewBox="0 0 17 15"><path d="M1.5 7.5L6 12.5L15.5 1.5" fill="none" stroke="#f2885a" stroke-width="2.6"/></svg>
<span id="t73" class="t " style="left:99px;top:555px;line-height:20px;font-size:15px;color:#1a1a1a;letter-spacing:0.037px;">"main"@1 in group "main": RUNNING</span>
<svg style="left:598px;top:561px;" width="11" height="7" viewBox="0 0 11 7"><path d="M0 0H11L5.5 6.5Z" fill="#6e6e6e"/></svg>
<svg style="left:634px;top:555px;" width="16" height="18" viewBox="0 0 16 18"><path d="M8 17V2M2 8L8 2L14 8" fill="none" stroke="#5a5a5a" stroke-width="1.8"/></svg>
<svg style="left:668px;top:555px;" width="16" height="18" viewBox="0 0 16 18"><path d="M8 1V16M2 10L8 16L14 10" fill="none" stroke="#5a5a5a" stroke-width="1.8"/></svg>
<svg style="left:702.5px;top:557px;" width="15" height="15" viewBox="0 0 15 15"><path d="M0.2 0.3H14.8L9.2 7.2V14.5H5.8V7.2Z" fill="#5a5a5a"/></svg>
<div style="left:64px;top:584px;width:666px;height:155px;background:#ffffe4;"></div>
<div style="left:717px;top:584px;width:13px;height:155px;background:#e8e7cf;"></div>
<div style="left:64px;top:635px;width:666px;height:25px;background:#2675bf;"></div>
<div style="left:717px;top:635px;width:13px;height:25px;background:#3a7fc0;"></div>
<div style="left:64px;top:584px;width:666px;height:155px;overflow:hidden;">
<span id="t74" class="t " style="left:21.200000000000003px;top:4px;line-height:20px;font-size:15px;color:#7b7b7b;letter-spacing:-0.237px;">register:78,</span>
<span id="t75" class="t " style="left:97.6px;top:4px;line-height:20px;font-size:15px;color:#7b7b7b;letter-spacing:-0.105px;">NacosAutoServiceRegistration</span>
<span id="t76" class="t " style="left:304.9px;top:4px;line-height:20px;font-size:15px;color:#7b7b7b;letter-spacing:-0.075px;font-style:italic;">(com.alibaba.cloud.nacos.registry)</span>
<span id="t77" class="t " style="left:21.200000000000003px;top:29px;line-height:20px;font-size:15px;color:#7b7b7b;letter-spacing:-0.315px;">start:138,</span>
<span id="t78" class="t " style="left:84.80000000000001px;top:29px;line-height:20px;font-size:15px;color:#7b7b7b;letter-spacing:-0.056px;">AbstractAutoServiceRegistration</span>
<span id="t79" class="t " style="left:305.6px;top:29px;line-height:20px;font-size:15px;color:#7b7b7b;letter-spacing:0.008px;font-style:italic;">(org.springframework.cloud.client.serviceregistry)</span>
<span id="t80" class="t " style="left:21.200000000000003px;top:54px;line-height:20px;font-size:15px;color:#fff;letter-spacing:-0.048px;">bind:101,</span>
<span id="t81" class="t " style="left:86.69999999999999px;top:54px;line-height:20px;font-size:15px;color:#fff;letter-spacing:-0.056px;">AbstractAutoServiceRegistration</span>
<span id="t82" class="t " style="left:307.9px;top:54px;line-height:20px;font-size:15px;color:#fff;letter-spacing:0.006px;font-style:italic;">(org.springframework.cloud.client.serviceregistry)</span>
<span id="t83" class="t " style="left:21.200000000000003px;top:79px;line-height:20px;font-size:15px;color:#7b7b7b;letter-spacing:0.079px;">onApplicationEvent:88,</span>
<span id="t84" class="t " style="left:180.6px;top:79px;line-height:20px;font-size:15px;color:#7b7b7b;letter-spacing:-0.046px;">AbstractAutoServiceRegistration</span>
<span id="t85" class="t " style="left:401.8px;top:79px;line-height:20px;font-size:15px;color:#7b7b7b;letter-spacing:0.008px;font-style:italic;">(org.springframework.cloud.client.serviceregistry)</span>
<span id="t86" class="t " style="left:21.200000000000003px;top:104px;line-height:20px;font-size:15px;color:#7b7b7b;letter-spacing:0.079px;">onApplicationEvent:47,</span>
<span id="t87" class="t " style="left:180.6px;top:104px;line-height:20px;font-size:15px;color:#7b7b7b;letter-spacing:-0.046px;">AbstractAutoServiceRegistration</span>
<span id="t88" class="t " style="left:401.8px;top:104px;line-height:20px;font-size:15px;color:#7b7b7b;letter-spacing:0.008px;font-style:italic;">(org.springframework.cloud.client.serviceregistry)</span>
<span id="t89" class="t " style="left:21.200000000000003px;top:129px;line-height:20px;font-size:15px;color:#7b7b7b;letter-spacing:-0.139px;">doInvokeListener:172,</span>
<span id="t90" class="t " style="left:170.1px;top:129px;line-height:20px;font-size:15px;color:#7b7b7b;letter-spacing:0.154px;">SimpleApplicationEventMulticaster</span>
<span id="t91" class="t " style="left:411.9px;top:129px;line-height:20px;font-size:15px;color:#7b7b7b;letter-spacing:0.045px;font-style:italic;">(org.springframework.context.event)</span>
</div>
<div style="left:717px;top:585px;width:13px;height:154px;background:rgba(232,231,207,0.0);"></div>
<div style="left:730px;top:511px;width:1px;height:228px;background:#d1d1d1;"></div>
<div style="left:731px;top:511px;width:1114px;height:33px;background:#f2f2f2;"></div>
<span id="t92" class="t " style="left:747px;top:517.2px;line-height:20px;font-size:14px;color:#1a1a1a;letter-spacing:-0.259px;">Variables</span>
<div style="left:731px;top:544px;width:1114px;height:1px;background:#d1d1d1;"></div>
<div style="left:731px;top:545px;width:30px;height:194px;background:#f2f2f2;"></div>
<div style="left:761px;top:545px;width:1px;height:194px;background:#d1d1d1;"></div>
<div style="left:762px;top:545px;width:1083px;height:194px;background:#fff;"></div>
<svg style="left:739px;top:555px;" width="14" height="14" viewBox="0 0 14 14"><path d="M7 0.5V13.5M0.5 7H13.5" stroke="#5a5a5a" stroke-width="1.8"/></svg>
<div style="left:740px;top:595px;width:12px;height:2px;background:#c8c8c8;"></div>
<svg style="left:739px;top:625px;" width="14" height="8" viewBox="0 0 14 8"><path d="M0 8L7 0.5L14 8Z" fill="#c8c8c8"/></svg>
<svg style="left:739px;top:659px;" width="14" height="8" viewBox="0 0 14 8"><path d="M0 0L7 7.5L14 0Z" fill="#c8c8c8"/></svg>
<svg style="left:738px;top:688px;" width="16" height="18" viewBox="0 0 16 18"><path d="M1 1H11V3H3V14H1Z" fill="#6e6e6e"/><rect x="5" y="5" width="10" height="12" fill="#6e6e6e"/><path d="M7 8.5H13M7 11H13M7 13.5H13" stroke="#f2f2f2" stroke-width="1"/></svg>
<div style="left:732px;top:718px;width:28px;height:24px;background:#d6d6d6;border-radius:4px;"></div>
<svg style="left:736px;top:726px;" width="20" height="10" viewBox="0 0 20 10"><circle cx="5" cy="5" r="3.8" fill="none" stroke="#6e6e6e" stroke-width="1.7"/><circle cx="15" cy="5" r="3.8" fill="none" stroke="#6e6e6e" stroke-width="1.7"/><path d="M8.6 4.2Q10 3 11.4 4.2" fill="none" stroke="#6e6e6e" stroke-width="1.4"/></svg>
<div style="left:762px;top:571px;width:1083px;height:25px;background:#d4d4d4;"></div>
<div style="left:762px;top:545px;width:1036px;height:194px;overflow:hidden;">
<svg style="left:8px;top:7px;" width="8" height="12" viewBox="0 0 8 12"><path d="M1.5 1L6.5 6L1.5 11" fill="none" stroke="#6e6e6e" stroke-width="1.6"/></svg>
<svg style="left:33.8px;top:6.4px;" width="13" height="14" viewBox="0 0 13 14"><path d="M0 1.7H12.2M0 6.7H12.2M0 11.7H12.2" stroke="#f7c575" stroke-width="3.4"/></svg>
<span id="t93" class="t " style="left:54px;top:3.5px;line-height:20px;font-size:15px;color:#7a1a1a;letter-spacing:0.414px;">this</span>
<span id="t94" class="t " style="left:84.20000000000005px;top:3.5px;line-height:20px;font-size:15px;color:#1a1a1a;letter-spacing:-1.166px;">=</span>
<span id="t95" class="t " style="left:97px;top:3.5px;line-height:20px;font-size:15px;color:#8c8c8c;letter-spacing:-0.133px;">{NacosAutoServiceRegistration@11233}</span>
<svg style="left:6px;top:34px;" width="12" height="8" viewBox="0 0 12 8"><path d="M1 1.5L6 6.5L11 1.5" fill="none" stroke="#6e6e6e" stroke-width="1.6"/></svg>
<svg style="left:31.5px;top:29.5px;" width="18" height="18" viewBox="0 0 18 18"><circle cx="9" cy="9" r="8.6" fill="#f4c47c"/><text x="9" y="13" font-family="Liberation Sans,sans-serif" font-size="12" text-anchor="middle" fill="#6b4a1e">p</text></svg>
<span id="t96" class="t " style="left:54px;top:28.5px;line-height:20px;font-size:15px;color:#7a1a1a;letter-spacing:0.059px;">event</span>
<span id="t97" class="t " style="left:96.20000000000005px;top:28.5px;line-height:20px;font-size:15px;color:#1a1a1a;letter-spacing:-1.166px;">=</span>
<span id="t98" class="t " style="left:110px;top:28.5px;line-height:20px;font-size:15px;color:#8c8c8c;letter-spacing:-0.129px;">{ServletWebServerInitializedEvent@11266}</span>
<span id="t99" class="t " style="left:398px;top:28.5px;line-height:20px;font-size:15px;color:#000;letter-spacing:-0.001px;">"org.springframework.boot.web.servlet.context.ServletWebServerInitializedEvent[source=org.sp</span>
<span class="t " style="left:1032px;top:28.5px;line-height:20px;font-size:15px;color:#000;letter-spacing:-0.001px;">ringframework.boot.web.embedded.tomcat.TomcatWebServer@5a8d676e]"</span>
<svg style="left:31px;top:57px;" width="8" height="12" viewBox="0 0 8 12"><path d="M1.5 1L6.5 6L1.5 11" fill="none" stroke="#6e6e6e" stroke-width="1.6"/></svg>
<svg style="left:53.5px;top:54.5px;" width="18" height="18" viewBox="0 0 18 18"><circle cx="9" cy="9" r="8.6" fill="#f4c47c"/><text x="9" y="13" font-family="Liberation Sans,sans-serif" font-size="12" text-anchor="middle" fill="#6b4a1e">f</text><ellipse cx="2.6" cy="2.4" rx="3" ry="1.9" transform="rotate(-35 2.6 2.4)" fill="#9aa7b0"/><path d="M3.5 4L6.5 7" stroke="#9aa7b0" stroke-width="1"/></svg>
<span id="t100" class="t " style="left:77px;top:53.5px;line-height:20px;font-size:15px;color:#7a1a1a;letter-spacing:0.254px;">applicationContext</span>
<span id="t101" class="t " style="left:210.20000000000005px;top:53.5px;line-height:20px;font-size:15px;color:#1a1a1a;letter-spacing:-1.166px;">=</span>
<span id="t102" class="t " style="left:224px;top:53.5px;line-height:20px;font-size:15px;color:#8c8c8c;letter-spacing:0.078px;">{AnnotationConfigServletWebServerApplicationContext@11238}</span>
<span id="t103" class="t " style="left:661px;top:53.5px;line-height:20px;font-size:15px;color:#000;letter-spacing:0.071px;">"org.springframework.boot.web.servlet.context.Annotati</span>
<span class="t " style="left:1032px;top:53.5px;line-height:20px;font-size:15px;color:#000;letter-spacing:0.071px;">onConfigServletWebServerApplicationContext@1c9b0314"</span>
<svg style="left:53.5px;top:79.5px;" width="18" height="18" viewBox="0 0 18 18"><circle cx="9" cy="9" r="8.6" fill="#f4c47c"/><text x="9" y="13" font-family="Liberation Sans,sans-serif" font-size="12" text-anchor="middle" fill="#6b4a1e">f</text><ellipse cx="2.6" cy="2.4" rx="3" ry="1.9" transform="rotate(-35 2.6 2.4)" fill="#9aa7b0"/><path d="M3.5 4L6.5 7" stroke="#9aa7b0" stroke-width="1"/></svg>
<span id="t104" class="t " style="left:77px;top:78.5px;line-height:20px;font-size:15px;color:#7a1a1a;letter-spacing:0.201px;">timestamp</span>
<span id="t105" class="t " style="left:153.20000000000005px;top:78.5px;line-height:20px;font-size:15px;color:#1a1a1a;letter-spacing:-1.166px;">=</span>
<span id="t106" class="t " style="left:167px;top:78.5px;line-height:20px;font-size:15px;color:#000;letter-spacing:-0.419px;">1722664202836</span>
<svg style="left:31px;top:107px;" width="8" height="12" viewBox="0 0 8 12"><path d="M1.5 1L6.5 6L1.5 11" fill="none" stroke="#6e6e6e" stroke-width="1.6"/></svg>
<svg style="left:53.5px;top:104.5px;" width="18" height="18" viewBox="0 0 18 18"><circle cx="9" cy="9" r="8.6" fill="#f4c47c"/><text x="9" y="13" font-family="Liberation Sans,sans-serif" font-size="12" text-anchor="middle" fill="#6b4a1e">f</text></svg>
<span id="t107" class="t " style="left:77px;top:103.5px;line-height:20px;font-size:15px;color:#7a1a1a;letter-spacing:-0.172px;">source</span>
<span id="t108" class="t " style="left:126.20000000000005px;top:103.5px;line-height:20px;font-size:15px;color:#1a1a1a;letter-spacing:-1.166px;">=</span>
<span id="t109" class="t " style="left:140px;top:103.5px;line-height:20px;font-size:15px;color:#8c8c8c;letter-spacing:-0.172px;">{TomcatWebServer@11263}</span>
<svg style="left:8px;top:132px;" width="8" height="12" viewBox="0 0 8 12"><path d="M1.5 1L6.5 6L1.5 11" fill="none" stroke="#6e6e6e" stroke-width="1.6"/></svg>
<svg style="left:33.8px;top:131.4px;" width="13" height="14" viewBox="0 0 13 14"><path d="M0 1.7H12.2M0 6.7H12.2M0 11.7H12.2" stroke="#f7c575" stroke-width="3.4"/></svg>
<span id="t110" class="t " style="left:54px;top:128.5px;line-height:20px;font-size:15px;color:#7a1a1a;letter-spacing:0.232px;">context</span>
<span id="t111" class="t " style="left:109.20000000000005px;top:128.5px;line-height:20px;font-size:15px;color:#1a1a1a;letter-spacing:-1.166px;">=</span>
<span id="t112" class="t " style="left:123px;top:128.5px;line-height:20px;font-size:15px;color:#8c8c8c;letter-spacing:0.061px;">{AnnotationConfigServletWebServerApplicationContext@11238}</span>
<span id="t113" class="t " style="left:559px;top:128.5px;line-height:20px;font-size:15px;color:#000;letter-spacing:0.085px;">"org.springframework.boot.web.servlet.context.AnnotationConfigServle</span>
<svg style="left:8px;top:157px;" width="8" height="12" viewBox="0 0 8 12"><path d="M1.5 1L6.5 6L1.5 11" fill="none" stroke="#6e6e6e" stroke-width="1.6"/></svg>
<svg style="left:30px;top:158px;" width="20" height="10" viewBox="0 0 20 10"><circle cx="5" cy="5" r="3.8" fill="none" stroke="#7f8b93" stroke-width="1.7"/><circle cx="15" cy="5" r="3.8" fill="none" stroke="#7f8b93" stroke-width="1.7"/><path d="M8.6 4.2Q10 3 11.4 4.2" fill="none" stroke="#7f8b93" stroke-width="1.4"/></svg>
<span id="t114" class="t " style="left:54px;top:153.5px;line-height:20px;font-size:15px;color:#7a1a1a;letter-spacing:0.182px;">this.port</span>
<span id="t115" class="t " style="left:114.20000000000005px;top:153.5px;line-height:20px;font-size:15px;color:#1a1a1a;letter-spacing:-1.166px;">=</span>
<span id="t116" class="t " style="left:128px;top:153.5px;line-height:20px;font-size:15px;color:#8c8c8c;letter-spacing:-0.019px;">{AtomicInteger@11246}</span>
<span id="t117" class="t " style="left:291px;top:153.5px;line-height:20px;font-size:15px;color:#000;letter-spacing:-0.005px;">"8063"</span>
</div>
<div style="left:1798px;top:545px;width:47px;height:194px;overflow:hidden;">
<span id="t118" class="t " style="left:1px;top:28.5px;line-height:20px;font-size:15px;color:#6f9fdc;letter-spacing:-0.115px;">... View</span>
<span id="t119" class="t " style="left:1px;top:53.5px;line-height:20px;font-size:15px;color:#6f9fdc;letter-spacing:-0.115px;">... View</span>
<span id="t120" class="t " style="left:1px;top:128.5px;line-height:20px;font-size:15px;color:#6f9fdc;letter-spacing:-0.115px;">... View</span>
</div>
<div style="left:1845px;top:511px;width:1px;height:228px;background:#d1d1d1;"></div>
<div style="left:1846px;top:511px;width:37px;height:33px;background:#f2f2f2;"></div>
<svg style="left:1871.5px;top:523.5px;" width="12" height="9" viewBox="0 0 12 9"><path d="M0.8 1L6.5 6.8L12.2 1" fill="none" stroke="#5a5a5a" stroke-width="1.8"/></svg>
<div style="left:1846px;top:544px;width:37px;height:1px;background:#d1d1d1;"></div>
<div style="left:1846px;top:542px;width:14px;height:3px;background:#9aa7c4;"></div>
<div style="left:1846px;top:545px;width:37px;height:194px;background:#fff;"></div>
<div style="left:1849px;top:549px;width:7px;height:29px;background:#fff;border:1px solid #b8b8b8;border-radius:4px;"></div>
<div style="left:1861px;top:556px;width:1px;height:12px;background:#c8c8c8;"></div>
<svg style="left:1870.0px;top:556.0px;" width="16" height="16" viewBox="0 0 16 16"><g transform="translate(8,8)"><g fill="#6e6e6e"><rect x="-2.1" y="-7.7" width="4.2" height="5" rx="0.6" transform="rotate(0)"/><rect x="-2.1" y="-7.7" width="4.2" height="5" rx="0.6" transform="rotate(60)"/><rect x="-2.1" y="-7.7" width="4.2" height="5" rx="0.6" transform="rotate(120)"/><rect x="-2.1" y="-7.7" width="4.2" height="5" rx="0.6" transform="rotate(180)"/><rect x="-2.1" y="-7.7" width="4.2" height="5" rx="0.6" transform="rotate(240)"/><rect x="-2.1" y="-7.7" width="4.2" height="5" rx="0.6" transform="rotate(300)"/></g><circle r="5.9" fill="#6e6e6e"/><circle r="2.7" fill="#fff"/></g></svg>
<div style="left:1846px;top:583px;width:37px;height:1px;background:#ededed;"></div>
<div style="left:1860px;top:584px;width:1px;height:29px;background:#d1d1d1;"></div>
<span id="t121" class="t " style="left:1871px;top:590px;line-height:20px;font-size:15px;color:#1a1a1a;">Co</span>
<span id="t122" class="t " style="left:1855px;top:591px;line-height:20px;font-size:12px;color:#333;">..</span>
<div style="left:1846px;top:613px;width:37px;height:1px;background:#d1d1d1;"></div>
<div style="left:1846px;top:700px;width:37px;height:39px;overflow:hidden;">
<span id="t123" class="t " style="left:-7px;top:13px;line-height:20px;font-size:15px;color:#7a7a7a;">loaded</span>
</div>
<span id="t124" class="t " style="left:1487px;top:684px;line-height:44px;font-size:34px;color:#e1e1e1;letter-spacing:-0.885px;text-shadow:1px 1px 1.2px rgba(150,150,150,0.7);">CSDN @</span>
<span id="t125" class="t " style="left:1623.5px;top:684px;line-height:44px;font-size:36px;color:#e1e1e1;letter-spacing:0.069px;text-shadow:1px 1px 1.2px rgba(150,150,150,0.7);font-weight:300;">乘风破浪的码农</span>
</div></body></html>
